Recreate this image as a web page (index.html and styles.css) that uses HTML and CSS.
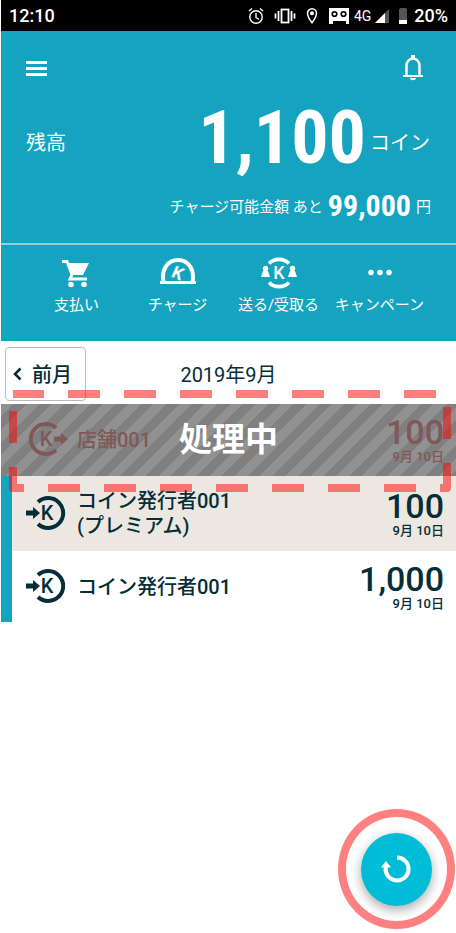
FILE: index.html
```html
<!DOCTYPE html>
<html lang="ja">
<head>
<meta charset="utf-8">
<meta name="viewport" content="width=device-width, initial-scale=1">
<title>コイン</title>
<link rel="stylesheet" href="styles.css">
</head>
<body>
<div class="app">
  <div class="status">
    <span class="clock">12:10</span>
    <svg class="status-alarm" width="16" height="18" viewBox="0 0 16 18" fill="none" stroke="#fff" stroke-width="1.400"><circle cx="8" cy="10" r="6.200"/><path d="M8 6v4.500l3 2M1 4l3-2.500M15 4l-3-2.500"/></svg>
    <svg class="status-vibrate" width="22" height="18" viewBox="0 0 22 18" fill="none" stroke="#fff" stroke-width="1.800"><rect x="7.500" y="2.500" width="7" height="13"/><path d="M4.500 4v10M1.500 6.500v5M17.500 4v10M20.500 6.500v5"/></svg>
    <svg class="status-pin" width="12" height="18" viewBox="0 0 12 18"><path d="M6 1.800a4.500 4.500 0 0 0-4.500 4.500C1.500 10 6 15.800 6 15.800S10.500 10 10.500 6.300A4.500 4.500 0 0 0 6 1.800z" fill="none" stroke="#fff" stroke-width="1.500"/><circle cx="6" cy="6.300" r="2" fill="#fff"/></svg>
    <svg class="status-tape" width="20" height="18" viewBox="0 0 20 18"><path d="M0 1h20v16h-3v-3H4v3H0z" fill="#fff"/><circle cx="5.500" cy="7" r="2.300" fill="#fff" stroke="#000" stroke-width="1.600"/><circle cx="14.500" cy="7" r="2.300" fill="#fff" stroke="#000" stroke-width="1.600"/></svg>
    <span class="network">4G</span>
    <svg class="status-signal" width="14" height="16" viewBox="0 0 14 16"><path d="M0 15L14 1v14z" fill="#555"/><path d="M0 15L10 5v10z" fill="#fff"/></svg>
    <svg class="status-battery" width="10" height="18" viewBox="0 0 10 18"><path d="M2 1h6v1h1v15H1V2h1z" fill="#555"/><path d="M1 13h8v4H1z" fill="#fff"/></svg>
    <span class="percent">20%</span>
  </div>

  <header class="header">
    <div class="toolbar">
      <button class="icon-button" aria-label="メニュー"><svg width="21" height="15" viewBox="0 0 21 15" fill="#fff"><path d="M0 0h21v3H0zM0 6h21v3H0zM0 12h21v3H0z"/></svg></button>
      <button class="icon-button" aria-label="お知らせ"><svg width="20" height="26" viewBox="0 0 20 26"><path d="M0 20h20v2H0zM7 23h6c0 3-6 3-6 0z" fill="#fff"/><path d="M3.500 20V11c0-4 2.500-7.500 6.500-7.500s6.500 3.500 6.500 7.500v9" fill="none" stroke="#fff" stroke-width="2.500"/><path d="M8 0h4v4H8z" fill="#fff"/></svg></button>
    </div>
    <div class="balance">
      <span class="balance-label">残高</span>
      <span class="balance-value">1,100</span>
      <span class="balance-unit">コイン</span>
    </div>
    <p class="limit">チャージ可能金額 あと <strong>99,000</strong> 円</p>
    <nav class="actions">
      <a href="#pay"><svg width="36" height="34" viewBox="0 0 36 34"><path d="M3 6.500h5l5 13-2 4.500h17" fill="none" stroke="#fff" stroke-width="3"/><path d="M8 8h22l-6 12H13z" fill="#fff"/><circle cx="12" cy="29.500" r="2.800" fill="#fff"/><circle cx="25" cy="29.500" r="2.800" fill="#fff"/></svg>支払い</a>
      <a href="#charge"><svg width="36" height="34" viewBox="0 0 36 34"><path d="M3.500 27C1 14 8 5 18 5s17 9 14.500 22" fill="none" stroke="#fff" stroke-width="4"/><path d="M0 26h36v3H0z" fill="#fff"/><text x="18" y="24" text-anchor="middle" transform="rotate(24 18 18)" class="k-bold">K</text></svg>チャージ</a>
      <a href="#send"><svg width="36" height="34" viewBox="0 0 36 34"><path d="M8 8.500C13 3 23 3 28 8.500M8 27.500C13 33 23 33 28 27.500" fill="none" stroke="#fff" stroke-width="3.600"/><g fill="#fff"><circle cx="4.500" cy="13.500" r="2.700"/><circle cx="31.500" cy="13.500" r="2.700"/><path d="M0 22l2-6h5l2 6zM27 22l2-6h5l2 6z"/></g><text x="18" y="24" text-anchor="middle" class="k-white">K</text></svg>送る/受取る</a>
      <a href="#campaign"><svg width="36" height="34" viewBox="0 0 36 34" fill="#fff"><circle cx="9" cy="17.500" r="2.800"/><circle cx="18" cy="17.500" r="2.800"/><circle cx="27" cy="17.500" r="2.800"/></svg>キャンペーン</a>
    </nav>
  </header>

  <main>
    <div class="month-bar">
      <button class="prev"><svg width="9" height="14" viewBox="0 0 9 14"><path d="M7.500 1.500L2 7l5.500 5.500" fill="none" stroke="currentColor" stroke-width="2.500"/></svg>前月</button>
      <h1 class="month">2019年9月</h1>
      <span></span>
    </div>
    <div class="history">
      <ul class="entries">
        <li class="entry pending">
          <svg class="coin" viewBox="0 0 43 36"><path d="M31 7A15 15 0 1 0 31 29" fill="none" stroke="currentColor" stroke-width="4"/><path d="M29 15.500h7V12l7 6-7 6v-3.500h-7z" fill="currentColor"/><text x="21" y="25" text-anchor="middle" class="k-mark">K</text></svg>
          <span class="name">店舗001</span>
          <span class="amount"><b>100</b><small>9月 10日</small></span>
          <strong class="pending-label">処理中</strong>
        </li>
        <li class="entry shaded">
          <svg class="coin" viewBox="0 0 43 36"><path d="M13 7A15 15 0 1 1 13 29" fill="none" stroke="currentColor" stroke-width="4"/><path d="M1 15.500h7V12l7 6-7 6v-3.500H1z" fill="currentColor"/><text x="22" y="25" text-anchor="middle" class="k-mark">K</text></svg>
          <span class="name">コイン発行者001<br>(プレミアム)</span>
          <span class="amount"><b>100</b><small>9月 10日</small></span>
        </li>
        <li class="entry">
          <svg class="coin" viewBox="0 0 43 36"><path d="M13 7A15 15 0 1 1 13 29" fill="none" stroke="currentColor" stroke-width="4"/><path d="M1 15.500h7V12l7 6-7 6v-3.500H1z" fill="currentColor"/><text x="22" y="25" text-anchor="middle" class="k-mark">K</text></svg>
          <span class="name">コイン発行者001</span>
          <span class="amount"><b>1,000</b><small>9月 10日</small></span>
        </li>
      </ul>
      <svg class="frame" aria-hidden="true"><rect class="frame-line" x="4" y="4"/></svg>
    </div>
  </main>

  <div class="refresh-ring">
    <button class="refresh" aria-label="更新"><svg width="32" height="32" viewBox="0 0 32 32"><path d="M16 4.500A11.500 11.500 0 1 1 4.800 14" fill="none" stroke="#fff" stroke-width="4"/><path d="M0 14.500L5 8l5 6.500z" fill="#fff"/></svg></button>
  </div>
</div>
</body>
</html>
```

FILE: styles.css
```css
* { box-sizing: border-box; }

body {
  margin: 0;
  padding-left: 1px;
  background: #fff;
  color: #042e38;
  font-family: Roboto, "Noto Sans CJK JP", sans-serif;
}

button {
  padding: 0;
  border: 0;
  background: none;
  color: inherit;
  font: inherit;
}

svg { display: block; flex: none; }

.app {
  display: flex;
  flex-direction: column;
  min-height: 100vh;
}

/* Status bar */
.status {
  display: flex;
  align-items: center;
  height: 31px;
  padding: 0 8px;
  background: #000;
  color: #fff;
  font-size: 18px;
  font-weight: 500;
}

.clock { margin-right: auto; }
.status-alarm { margin-right: 10px; }
.status-vibrate { margin-right: 10px; }
.status-pin { margin-right: 11px; }
.status-tape { margin-right: 5px; }
.network { margin-right: 4px; font-size: 14px; font-weight: 400; }
.status-signal { margin-right: 9px; }
.status-battery { margin-right: 6px; }

/* Header */
.header {
  height: 310px;
  background: #15a3bf;
  color: #fff;
}

.toolbar {
  display: flex;
  align-items: center;
  justify-content: space-between;
  height: 74px;
  padding: 0 33px 0 25px;
}

.balance {
  display: flex;
  align-items: center;
  height: 72px;
  padding: 0 26px 0 25px;
}

.balance-label { margin-right: auto; font-size: 20px; }

.balance-value {
  padding-bottom: 6px;
  font-family: "Roboto Condensed", Roboto, sans-serif;
  font-size: 74px;
  font-weight: 700;
  line-height: 72px;
}

.balance-unit { margin-left: 4px; font-size: 20px; }

.limit {
  display: flex;
  align-items: center;
  justify-content: flex-end;
  gap: 5px;
  height: 68px;
  margin: 0;
  padding: 0 25px 10px 0;
  border-bottom: 2px solid #8cd0de;
  font-size: 15px;
}

.limit strong {
  font-family: "Roboto Condensed", Roboto, sans-serif;
  font-size: 30px;
  font-weight: 700;
}

.actions {
  display: grid;
  grid-template-columns: 100px 102px 100px 102px;
  justify-content: center;
  padding-top: 10px;
}

.actions a {
  display: flex;
  flex-direction: column;
  align-items: center;
  gap: 4px;
  color: inherit;
  font-size: 15px;
  line-height: 24px;
  text-decoration: none;
  white-space: nowrap;
}

.k-mark { fill: currentColor; font-size: 20px; font-weight: 500; }
.k-bold { fill: #fff; font-size: 17px; font-weight: 700; }
.k-white { fill: #fff; font-size: 18px; font-weight: 500; }

/* Month */
.month-bar {
  display: grid;
  grid-template-columns: 1fr auto 1fr;
  align-items: center;
  height: 63px;
  padding: 2px 4px 0;
}

.prev {
  display: flex;
  align-items: center;
  gap: 10px;
  width: 81px;
  height: 54px;
  padding-left: 7px;
  border: 1px solid #bbb;
  border-radius: 4px;
  font-size: 20px;
  font-weight: 500;
}

.month { margin: 0; font-size: 20px; font-weight: 400; }

/* Entries */
.history { position: relative; }

.entries {
  margin: 0;
  padding: 0;
  list-style: none;
}

.entry {
  display: flex;
  align-items: center;
  gap: 9px;
  height: 71px;
  padding: 0 12px 2px 13px;
  border-left: 11px solid #15a3bf;
}

.shaded { height: 75px; background: #ece8e1; }

.coin { width: 43px; height: 36px; }

.name {
  flex: 1;
  padding-top: 3px;
  font-size: 20px;
  font-weight: 500;
  line-height: 25px;
}

.amount {
  display: flex;
  flex-direction: column;
  align-items: flex-end;
}

.amount b { font-size: 34px; font-weight: 500; line-height: 36px; }
.amount small { font-size: 13px; font-weight: 500; line-height: 14px; }

.pending {
  position: relative;
  height: 72px;
  border-left-color: transparent;
  background: repeating-linear-gradient(135deg, #919191 0 9px, #808080 9px 18px) border-box;
  color: #805858;
}

.pending-label {
  position: absolute;
  inset: 0 11px 6px 0;
  display: grid;
  place-items: center;
  color: #fff;
  font-size: 33px;
}

.frame {
  position: absolute;
  top: -14px;
  left: 8px;
  width: calc(100% - 13px);
  height: 102px;
  overflow: visible;
}

.frame-line {
  width: calc(100% - 8px);
  height: 94px;
  fill: none;
  stroke: rgb(255 0 0 / 50%);
  stroke-width: 8px;
  stroke-linejoin: round;
  stroke-dasharray: 32px 24px;
  stroke-dashoffset: 1px;
}

/* Refresh */
.refresh-ring {
  display: grid;
  place-items: center;
  align-self: flex-end;
  width: 117px;
  height: 120px;
  margin: auto 1px 4px 0;
  border: 8px solid #ff8080;
  border-radius: 50%;
}

.refresh {
  display: grid;
  place-items: center;
  width: 71px;
  height: 73px;
  border-radius: 50%;
  background: #00bcd7;
  box-shadow: 0 4px 12px rgb(0 0 0 / 35%);
}
```
